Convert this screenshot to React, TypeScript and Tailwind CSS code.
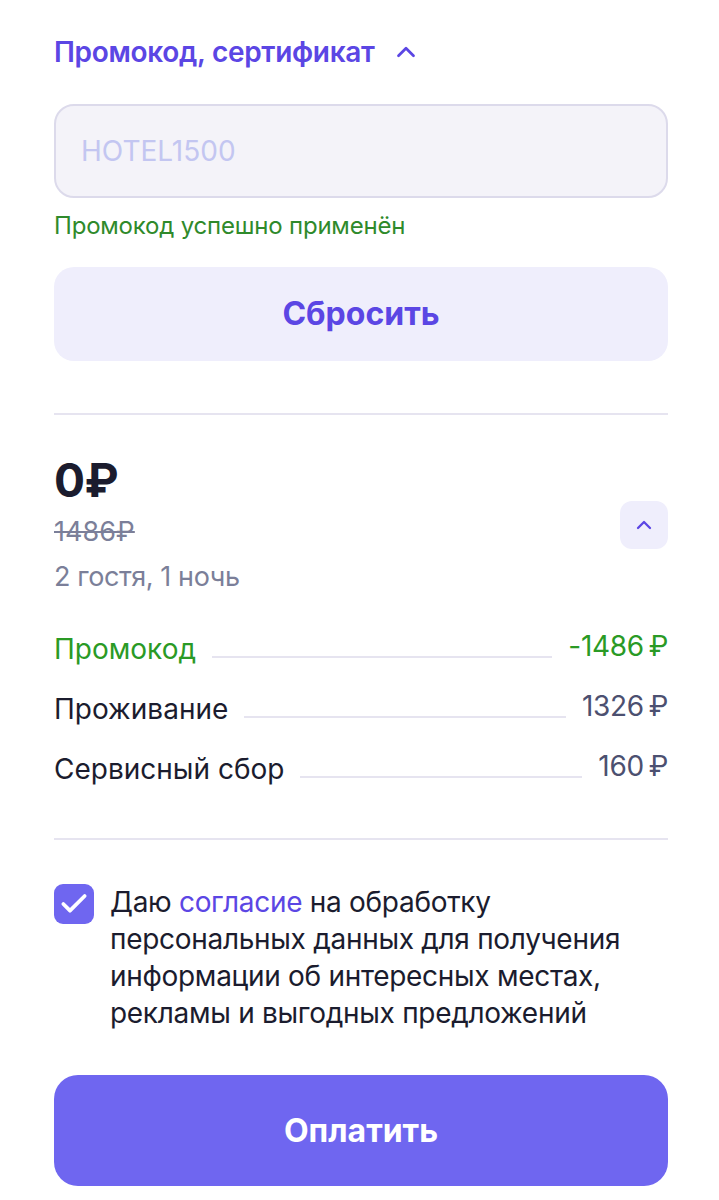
import { Check, ChevronUp } from 'lucide-react'

const rows = [
  { label: 'Промокод', value: '-1486\u2009₽', green: true },
  { label: 'Проживание', value: '1326\u2009₽', green: false },
  { label: 'Сервисный сбор', value: '160\u2009₽', green: false },
]

export default function App() {
  return (
    <div className="min-h-[1200px] bg-white pl-[54px] pr-[51px] pt-[32px] font-['Inter',sans-serif] text-[#1b1c2e]">
      {/* Промокод */}
      <button type="button" className="flex items-center gap-[16px] h-[40px] text-[28px] font-semibold text-[#5b46e4] tracking-[-0.3px]">
        Промокод, сертификат
        <ChevronUp className="w-[30px] h-[30px]" strokeWidth={2.2} />
      </button>

      <div className="mt-[32px] h-[94px] rounded-[20px] border-2 border-[#dcdaeb] bg-[#f4f3f9] flex items-center px-[25px]">
        <span className="text-[28px] text-[#c3c6f1]">HOTEL1500</span>
      </div>
      <p className="mt-[12px] text-[24px] leading-[32px] text-[#2f8a2b] tracking-[-0.2px]">Промокод успешно применён</p>

      <button type="button" className="mt-[25px] w-full h-[94px] rounded-[20px] bg-[#efeefc] text-[32px] font-bold text-[#5b46e4]">
        Сбросить
      </button>

      <div className="mt-[52px] h-[2px] bg-[#e6e4f0]" />

      {/* Итог */}
      <div className="mt-[39px] flex items-start justify-between">
        <div>
          <p className="text-[46px] leading-[52px] font-bold tracking-[-0.5px]">0₽</p>
          <p className="mt-[8px] text-[27px] leading-[36px] text-[#7b7f99] line-through decoration-2">1486₽</p>
          <p className="mt-[9px] text-[27px] leading-[36px] text-[#7b7f99] tracking-[-0.4px]">2 гостя, 1 ночь</p>
        </div>
        <button type="button" className="mt-[47px] w-[48px] h-[48px] rounded-[12px] bg-[#efeefc] flex items-center justify-center text-[#5b46e4]">
          <ChevronUp className="w-6 h-6" strokeWidth={2.3} />
        </button>
      </div>

      <div className="mt-[36px] flex flex-col gap-[24px]">
        {rows.map((row) => (
          <div key={row.label} className="flex items-end gap-4 h-[36px]">
            <span className={`text-[28px] leading-[36px] ${row.green ? 'text-[#2a9a25]' : 'text-[#1b1c2e]'}`}>{row.label}</span>
            <span className="flex-1 h-[2px] mb-[9px] bg-[#e6e4f0]" />
            <span className={`text-[28px] leading-[36px] mb-[3px] tracking-[-0.3px] ${row.green ? 'text-[#2a9a25]' : 'text-[#4c5070]'}`}>{row.value}</span>
          </div>
        ))}
      </div>

      <div className="mt-[51px] h-[2px] bg-[#e6e4f0]" />

      <label className="mt-[44px] flex items-start gap-4">
        <span className="shrink-0 w-[40px] h-[40px] rounded-[9px] bg-[#6f66f0] flex items-center justify-center text-white">
          <Check className="w-8 h-8" strokeWidth={2.8} />
        </span>
        <p className="text-[28px] leading-[37px] tracking-[-0.3px]">
          <span>Даю </span>
          <span className="text-[#5b46e4]">согласие</span>
          <span> на обработку персональных данных для получения информации об интересных местах, рекламы и выгодных предложений</span>
        </p>
      </label>

      <button type="button" className="mt-[43px] w-full h-[111px] rounded-[24px] bg-[#6f66f0] text-[32px] font-bold text-white">
        Оплатить
      </button>
    </div>
  )
}
